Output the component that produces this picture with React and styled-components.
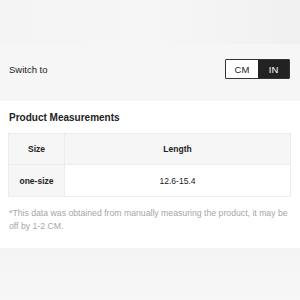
import React from "react";
import styled, { createGlobalStyle } from "styled-components";

const GlobalStyle = createGlobalStyle`
  html, body {
    margin: 0;
    padding: 0;
    background: #f6f6f6;
    font-family: "Liberation Sans", Arial, sans-serif;
  }
`;

const Page = styled.div`
  width: 300px;
  height: 300px;
  overflow: hidden;
  display: flex;
  flex-direction: column;
  background: #f6f6f6;
`;

const TopBand = styled.div`
  height: 44px;
  background: linear-gradient(90deg, #f4f4f4 0%, #f6f6f6 50%, #f0f0f0 100%);
`;

const SwitchRow = styled.div`
  height: 57px;
  display: flex;
  align-items: center;
  justify-content: space-between;
  padding: 0 10px 7px 9px;
  box-sizing: border-box;
`;

const SwitchLabel = styled.span`
  font-size: 9.5px;
  color: #222;
`;

const Toggle = styled.div`
  display: flex;
  border: 1px solid #333;
  border-radius: 1px;
  overflow: hidden;
  height: 20px;
  box-sizing: border-box;
`;

const ToggleOption = styled.div`
  width: ${(p) => p.$w}px;
  display: flex;
  align-items: center;
  justify-content: center;
  font-size: 9.5px;
  background: ${(p) => (p.$active ? "#222" : "#fff")};
  color: ${(p) => (p.$active ? "#fff" : "#222")};
`;

const Section = styled.div`
  background: #fff;
  padding: 10px 9px 0 8px;
  height: 147px;
  box-sizing: border-box;
`;

const Title = styled.div`
  font-size: 10px;
  font-weight: bold;
  color: #222;
  margin: 0 0 8px 1px;
  line-height: 14px;
`;

const Table = styled.div`
  display: grid;
  grid-template-columns: 56px 1fr;
  grid-auto-rows: 31px;
  border: 1px solid #ececec;
  box-sizing: border-box;
`;

const Cell = styled.div`
  display: flex;
  align-items: center;
  justify-content: center;
  font-size: 8.5px;
  color: #222;
  font-weight: ${(p) => (p.$bold ? "bold" : "normal")};
  background: ${(p) => (p.$shade ? "#f6f6f6" : "#fff")};
  border-right: ${(p) => (p.$first ? "1px solid #ececec" : "none")};
  border-bottom: ${(p) => (p.$lastRow ? "none" : "1px solid #ececec")};
`;

const Note = styled.p`
  margin: 10px 0 0 1px;
  font-size: 8.7px;
  line-height: 13px;
  color: #a6a6a6;
`;

const Bottom = styled.div`
  flex: 1;
  background: linear-gradient(180deg, #f4f4f4 0%, #f7f7f7 100%);
`;

export default function App() {
  return (
    <>
      <GlobalStyle />
      <Page>
        <TopBand />
        <SwitchRow>
          <SwitchLabel>Switch to</SwitchLabel>
          <Toggle>
            <ToggleOption $w={32}>CM</ToggleOption>
            <ToggleOption $w={31} $active>
              IN
            </ToggleOption>
          </Toggle>
        </SwitchRow>
        <Section>
          <Title>Product Measurements</Title>
          <Table>
            <Cell $shade $first $bold>Size</Cell>
            <Cell $shade $bold>Length</Cell>
            <Cell $shade $first $bold $lastRow>one-size</Cell>
            <Cell $lastRow>12.6-15.4</Cell>
          </Table>
          <Note>
            *This data was obtained from manually measuring the product, it may be
            off by 1-2 CM.
          </Note>
        </Section>
        <Bottom />
      </Page>
    </>
  );
}
